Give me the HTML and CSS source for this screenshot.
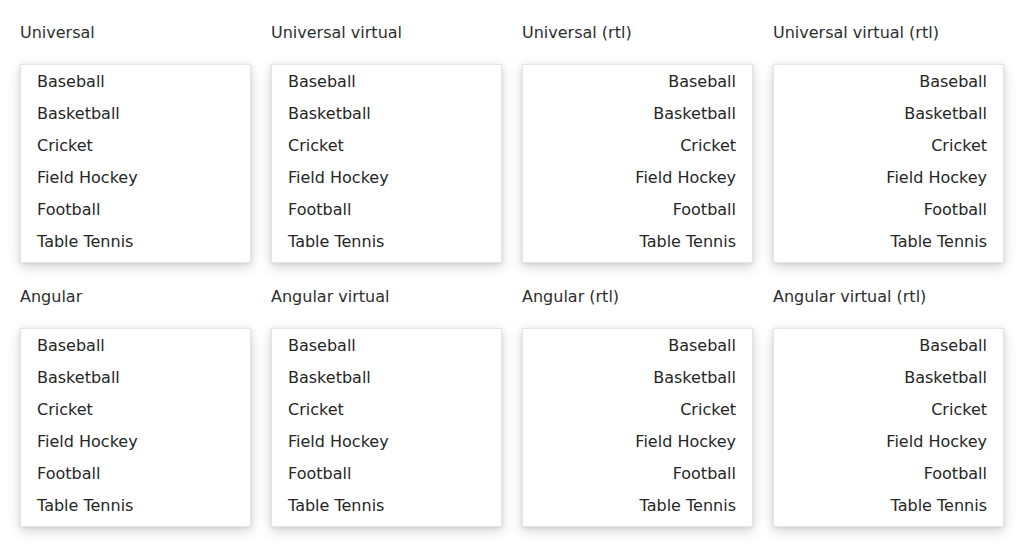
FILE: index.html
```html
<!DOCTYPE html>
<html>
<head>
<meta charset="utf-8">
<link rel="stylesheet" href="styles.css">
</head>
<body>
<div class="grid">
  <section class="demo">
    <div class="title">Universal</div>
    <ul class="list">
      <li>Baseball</li><li>Basketball</li><li>Cricket</li><li>Field Hockey</li><li>Football</li><li>Table Tennis</li>
    </ul>
  </section>
  <section class="demo">
    <div class="title">Universal virtual</div>
    <ul class="list">
      <li>Baseball</li><li>Basketball</li><li>Cricket</li><li>Field Hockey</li><li>Football</li><li>Table Tennis</li>
    </ul>
  </section>
  <section class="demo">
    <div class="title">Universal (rtl)</div>
    <ul class="list" dir="rtl">
      <li>Baseball</li><li>Basketball</li><li>Cricket</li><li>Field Hockey</li><li>Football</li><li>Table Tennis</li>
    </ul>
  </section>
  <section class="demo">
    <div class="title">Universal virtual (rtl)</div>
    <ul class="list" dir="rtl">
      <li>Baseball</li><li>Basketball</li><li>Cricket</li><li>Field Hockey</li><li>Football</li><li>Table Tennis</li>
    </ul>
  </section>
  <section class="demo">
    <div class="title">Angular</div>
    <ul class="list">
      <li>Baseball</li><li>Basketball</li><li>Cricket</li><li>Field Hockey</li><li>Football</li><li>Table Tennis</li>
    </ul>
  </section>
  <section class="demo">
    <div class="title">Angular virtual</div>
    <ul class="list">
      <li>Baseball</li><li>Basketball</li><li>Cricket</li><li>Field Hockey</li><li>Football</li><li>Table Tennis</li>
    </ul>
  </section>
  <section class="demo">
    <div class="title">Angular (rtl)</div>
    <ul class="list" dir="rtl">
      <li>Baseball</li><li>Basketball</li><li>Cricket</li><li>Field Hockey</li><li>Football</li><li>Table Tennis</li>
    </ul>
  </section>
  <section class="demo">
    <div class="title">Angular virtual (rtl)</div>
    <ul class="list" dir="rtl">
      <li>Baseball</li><li>Basketball</li><li>Cricket</li><li>Field Hockey</li><li>Football</li><li>Table Tennis</li>
    </ul>
  </section>
</div>
</body>
</html>
```
FILE: styles.css
```css
html, body {
  margin: 0;
  padding: 0;
  background: #fff;
}
body {
  font-family: "DejaVu Sans", sans-serif;
  font-size: 16px;
  color: #2a2a2a;
  padding: 20px;
}
.grid {
  display: grid;
  grid-template-columns: repeat(4, 231px);
  column-gap: 20px;
  row-gap: 21px;
}
.demo {
  display: flex;
  flex-direction: column;
}
.title {
  line-height: 24px;
  padding-top: 1px;
  margin-bottom: 19px;
  color: #2e2e2e;
}
.list {
  list-style: none;
  margin: 0;
  padding: 1px 0 4px 0;
  border: 1px solid #e4e4ea;
  background: #fff;
  box-shadow: 0 4px 12px rgba(0, 0, 0, 0.16), 0 1px 4px rgba(0, 0, 0, 0.09);
}
.list li {
  line-height: 32px;
  padding: 0 16px;
  color: #262626;
}
```
